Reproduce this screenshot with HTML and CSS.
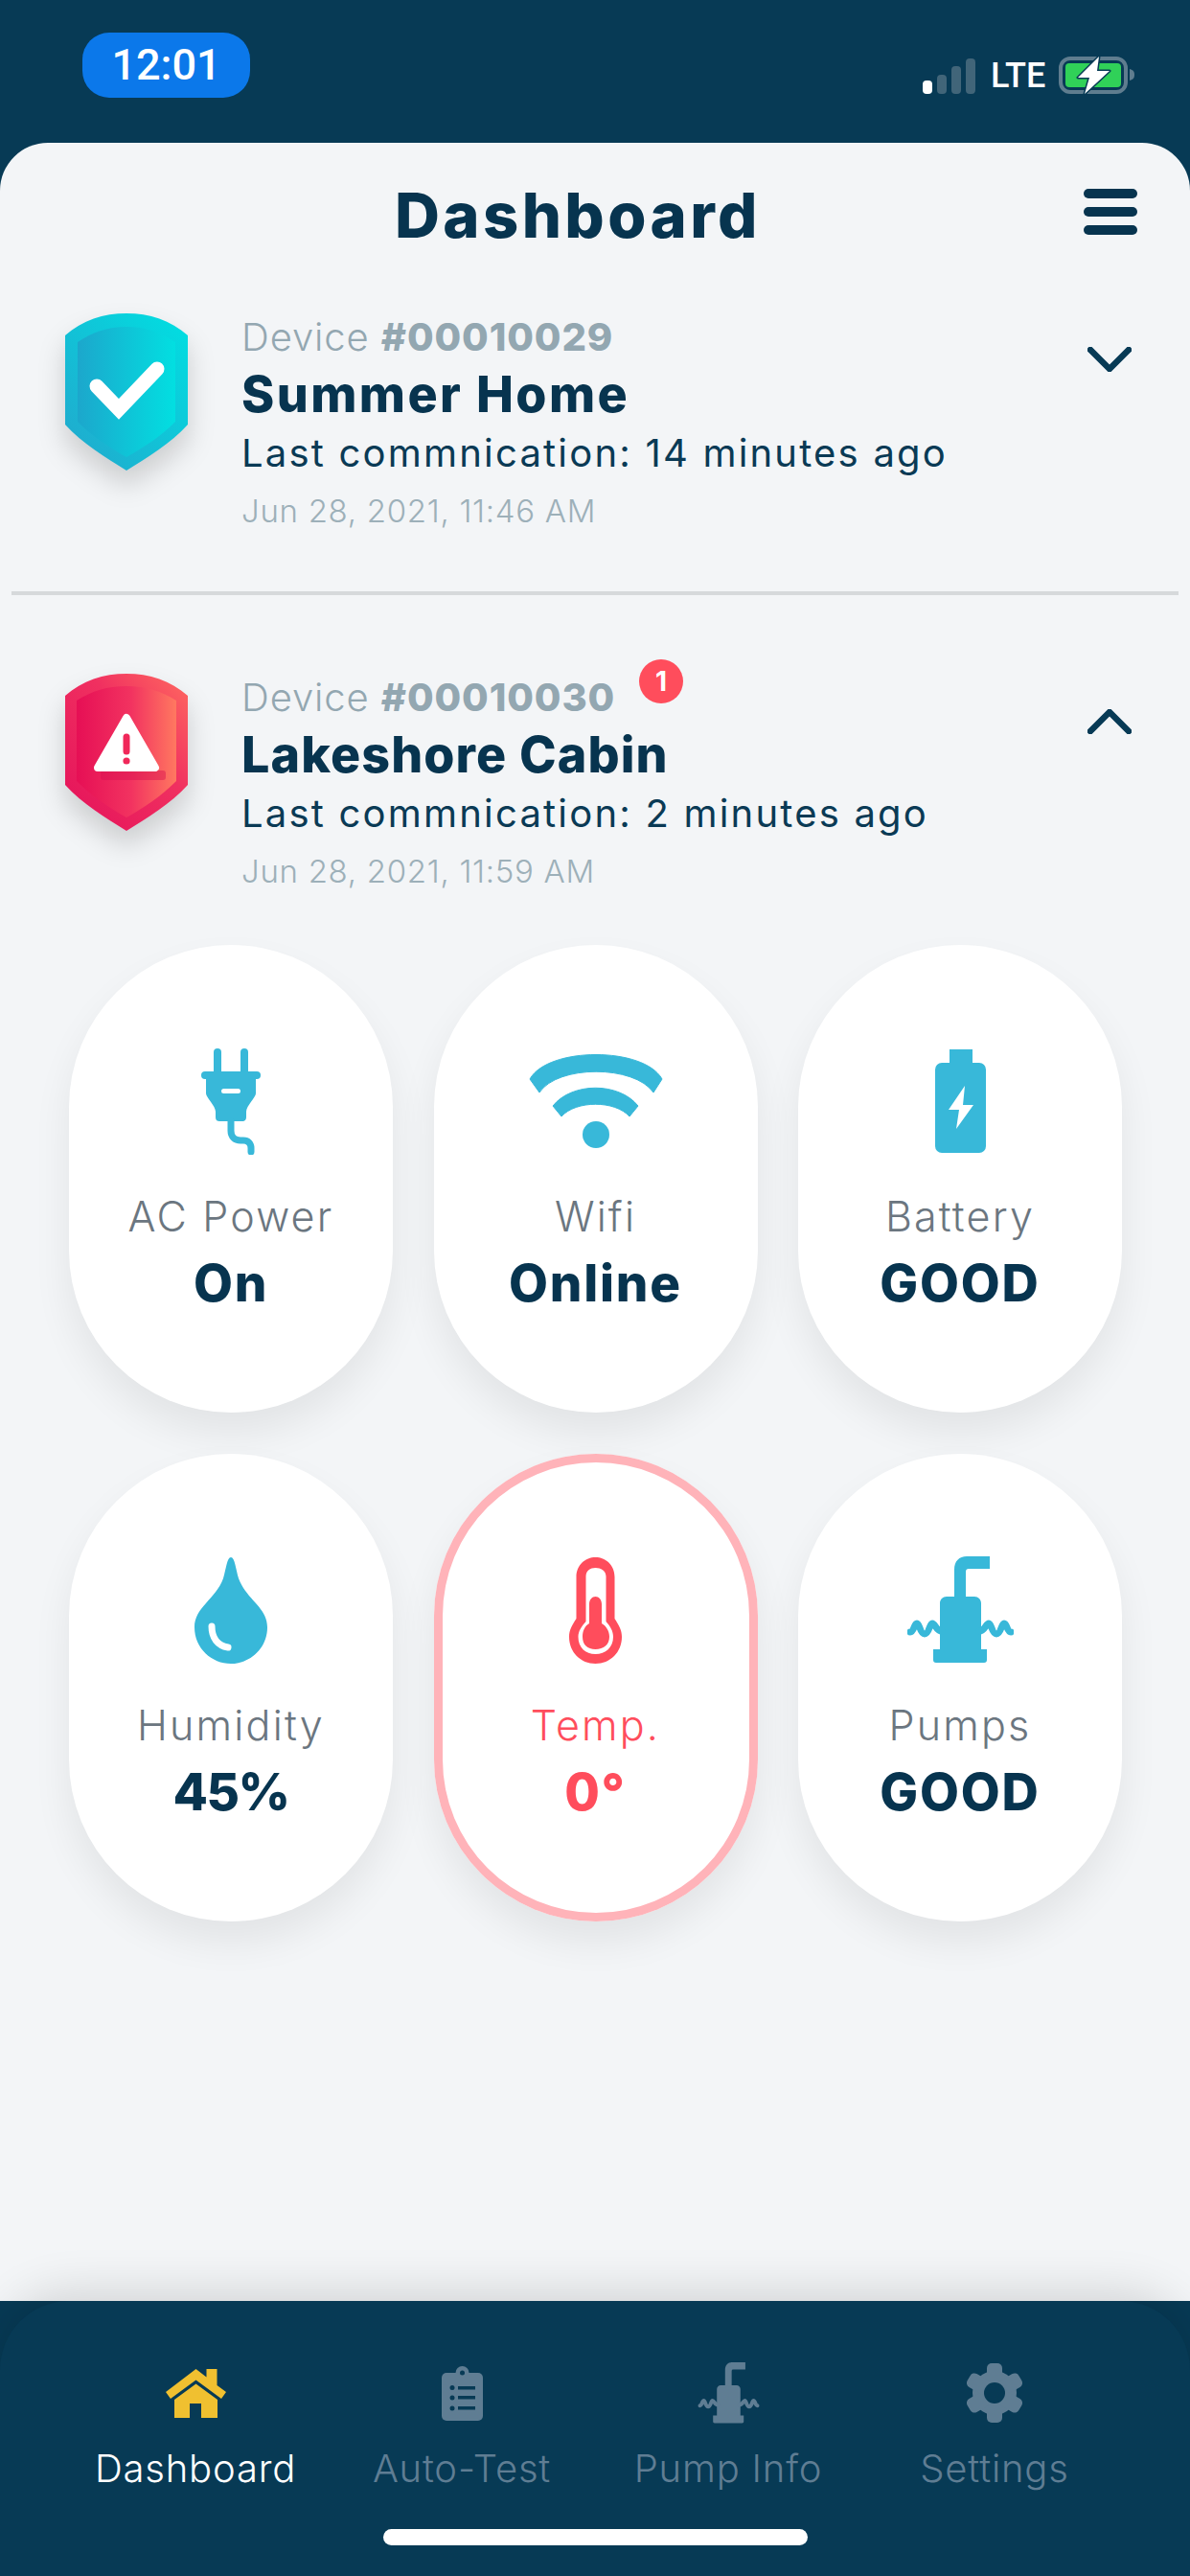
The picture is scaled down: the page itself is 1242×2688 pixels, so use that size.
FILE: index.html
```html
<!DOCTYPE html>
<html lang="en">
<head>
<meta charset="utf-8">
<title>Dashboard</title>
<link rel="stylesheet" href="styles.css">
</head>
<body>
<div class="app">
  <header class="status">
    <div class="clock">12:01</div>
    <div class="status-right">
      <div class="signal"><i class="b1"></i><i class="b2"></i><i class="b3"></i><i class="b4"></i></div>
      <span class="lte">LTE</span>
      <svg class="batt" width="82" height="42" viewBox="0 0 82 42">
        <rect x="2" y="4" width="68" height="35" rx="10" fill="none" stroke="#5f7d8f" stroke-width="4"/>
        <path d="M74 15c4 1 5 3 5 6s-1 5-5 6z" fill="#5f7d8f"/>
        <rect x="7" y="9" width="58" height="25" rx="4" fill="#30d158"/>
        <path d="M42 2 L20 24 H32 L27 41 L53 17 H40 Z" fill="#fff" stroke="#073a55" stroke-width="3" stroke-linejoin="round" paint-order="stroke"/>
      </svg>
    </div>
  </header>

  <main class="sheet">
    <div class="topbar">
      <h1 class="title">Dashboard</h1>
      <div class="burger"><i></i><i></i><i></i></div>
    </div>

    <section class="device">
      <svg class="shield" width="128" height="164" viewBox="0 0 128 164">
        <defs>
          <linearGradient id="cy1" x1="0" y1="1" x2="1" y2="0"><stop offset="0" stop-color="#23a6cc"/><stop offset="1" stop-color="#00e0e2"/></linearGradient>
          <linearGradient id="cy2" x1="0" y1="0" x2="1" y2="0"><stop offset="0" stop-color="#1ca7cc"/><stop offset="1" stop-color="#02dfe1"/></linearGradient>
        </defs>
        <path d="M0 23 C18 7 40 0 64 0 C88 0 110 7 128 23 V116 C110 136 86 150 64 164 C42 150 18 136 0 116 Z" fill="url(#cy1)"/>
        <path d="M13 30 C28 20 44 14 64 14 C84 14 100 20 115 30 V113 C100 128 82 140 64 150 C46 140 28 128 13 113 Z" fill="url(#cy2)"/>
        <path d="M33 76 L56 100 L96 58" fill="none" stroke="#fff" stroke-width="15" stroke-linejoin="miter" stroke-linecap="round"/>
      </svg>
      <div class="info">
        <div class="dev-id">Device <b>#00010029</b></div>
        <div class="dev-name">Summer Home</div>
        <div class="dev-last">Last commnication: 14 minutes ago</div>
        <div class="dev-date">Jun 28, 2021, 11:46 AM</div>
      </div>
      <svg class="chev" width="46" height="26" viewBox="0 0 46 26"><path d="M3 3 L23 23 L43 3" fill="none" stroke="#073a55" stroke-width="6.500" stroke-linecap="round" stroke-linejoin="round"/></svg>
    </section>

    <div class="divider"></div>

    <section class="device second">
      <svg class="shield" width="128" height="164" viewBox="0 0 128 164">
        <defs>
          <linearGradient id="rd1" x1="0" y1="1" x2="1" y2="0"><stop offset="0" stop-color="#e4105a"/><stop offset=".6" stop-color="#f03060"/><stop offset="1" stop-color="#ff6a60"/></linearGradient>
          <linearGradient id="rd2" x1="0" y1="0" x2="1" y2="0"><stop offset="0" stop-color="#e60f55"/><stop offset=".55" stop-color="#f23360"/><stop offset="1" stop-color="#ff7860"/></linearGradient>
        </defs>
        <path d="M0 23 C18 7 40 0 64 0 C88 0 110 7 128 23 V116 C110 136 86 150 64 164 C42 150 18 136 0 116 Z" fill="url(#rd1)"/>
        <path d="M12 28 C28 18 44 13 64 13 C84 13 100 18 116 28 V112 C100 128 82 140 64 150 C46 140 28 128 12 112 Z" fill="url(#rd2)"/>
        <rect x="37" y="101" width="68" height="10" rx="3" fill="#d80e50" opacity=".45"/>
        <path d="M64 46 L94 98 H34 Z" fill="#fff" stroke="#fff" stroke-width="8" stroke-linejoin="round"/>
        <path d="M64 66 V81" fill="none" stroke="#f0285a" stroke-width="7" stroke-linecap="round"/>
        <circle cx="64" cy="91" r="3.600" fill="#f0285a"/>
      </svg>
      <div class="info">
        <div class="dev-id">Device <b>#00010030</b><span class="badge">1</span></div>
        <div class="dev-name">Lakeshore Cabin</div>
        <div class="dev-last">Last commnication: 2 minutes ago</div>
        <div class="dev-date">Jun 28, 2021, 11:59 AM</div>
      </div>
      <svg class="chev" width="46" height="26" viewBox="0 0 46 26"><path d="M3 23 L23 3 L43 23" fill="none" stroke="#073a55" stroke-width="6.500" stroke-linecap="round" stroke-linejoin="round"/></svg>
    </section>

    <section class="tiles">
      <article class="tile">
        <div class="tile-icon">
          <svg width="62" height="111" viewBox="0 0 62 111">
            <rect x="13" y="0" width="8" height="28" rx="4" fill="#38b8d9"/>
            <rect x="41" y="0" width="8" height="28" rx="4" fill="#38b8d9"/>
            <rect x="0" y="24" width="62" height="8" rx="4" fill="#38b8d9"/>
            <path d="M5 30 H57 V47 C57 51 47 60 47 66 V72 C47 75 45 76 43 76 H19 C17 76 15 75 15 72 V66 C15 60 5 51 5 47 Z" fill="#38b8d9"/>
            <rect x="21" y="42" width="20" height="5" rx="2.500" fill="#fff"/>
            <path d="M31 76 V86 C31 92 35 96 41 96 H44 C49 96 52 99 52 104 V108" fill="none" stroke="#38b8d9" stroke-width="7" stroke-linecap="round"/>
          </svg>
        </div>
        <div class="tile-label">AC Power</div>
        <div class="tile-value">On</div>
      </article>
      <article class="tile">
        <div class="tile-icon">
          <svg width="140" height="98" viewBox="0 0 140 98">
            <path d="M1 26 C20 -8 120 -8 139 26 L130 40 C110 11 30 11 11 40 Z" fill="#38b8d9" stroke="#38b8d9" stroke-width="1" stroke-linejoin="round"/>
            <path d="M25 54 C45 29 94 29 114 54 L105 65 C90 48 49 48 34 65 Z" fill="#38b8d9" stroke="#38b8d9" stroke-width="1" stroke-linejoin="round"/>
            <circle cx="70" cy="84" r="14" fill="#38b8d9"/>
          </svg>
        </div>
        <div class="tile-label">Wifi</div>
        <div class="tile-value">Online</div>
      </article>
      <article class="tile">
        <div class="tile-icon">
          <svg width="53" height="108" viewBox="0 0 53 108">
            <rect x="15" y="0" width="24" height="18" fill="#38b8d9"/>
            <rect x="0" y="14" width="53" height="94" rx="7" fill="#38b8d9"/>
            <path d="M31 38 L14 63 H25 L22 83 L40 58 H29 Z" fill="#fff"/>
          </svg>
        </div>
        <div class="tile-label">Battery</div>
        <div class="tile-value">GOOD</div>
      </article>
      <article class="tile">
        <div class="tile-icon">
          <svg width="76" height="111" viewBox="0 0 76 111">
            <path d="M38 0 C42 0 43 12 46 22 C54 44 76 52 76 73 C76 95 58 111 38 111 C18 111 0 95 0 73 C0 52 22 44 30 22 C33 12 34 0 38 0 Z" fill="#38b8d9"/>
            <path d="M18 72 C18 84 24 92 35 94" fill="none" stroke="#fff" stroke-width="7" stroke-linecap="round"/>
          </svg>
        </div>
        <div class="tile-label">Humidity</div>
        <div class="tile-value tight">45%</div>
      </article>
      <article class="tile alert">
        <div class="tile-icon">
          <svg width="55" height="111" viewBox="0 0 55 111">
            <path d="M7.500 20.500 C7.500 8 17 0 27.500 0 C38 0 47.500 8 47.500 20.500 V64 C52 71 55 76 55 83 C55 99 43 111 27.500 111 C12 111 0 99 0 83 C0 76 3 71 7.500 64 Z" fill="#ff4d5c"/>
            <path d="M17.500 20 C17.500 14 22 11 27.500 11 C33 11 38.500 14 38.500 20 V67 C43 72 46 77 46 83 C46 94 38 101 27.500 101 C17 101 9.500 94 9.500 83 C9.500 77 13 72 17.500 67 Z" fill="#fff"/>
            <path d="M21 49 C21 44 24 41 27.500 41 C31 41 34 44 34 49 V69 C39 72 42 77 42 83 C42 91 36 96 27.500 96 C19 96 14 91 14 83 C14 77 16 72 21 69 Z" fill="#ff4d5c"/>
          </svg>
        </div>
        <div class="tile-label">Temp.</div>
        <div class="tile-value">0°</div>
      </article>
      <article class="tile">
        <div class="tile-icon">
          <svg class="pump" width="111" height="112" viewBox="0 0 111 112">
            <path d="M49 44 V14 C49 5 54 0 62 0 H86 V13 H64 C62 13 61 14 61 16 V44 Z" fill="currentColor"/>
            <path d="M34 49 C34 45 37 42 41 42 H70 C74 42 77 45 77 49 V97 H83 V108 C83 110 82 111 80 111 H30 C28 111 27 110 27 108 V97 H34 Z" fill="currentColor"/>
            <path d="M3 79 C7 79 7 70 10 70 C13 70 13 81 18 81 C23 81 23 70 26 70 C29 70 30 78 36 78" fill="none" stroke="currentColor" stroke-width="7" stroke-linecap="round"/>
            <path d="M108 79 C104 79 104 70 101 70 C98 70 98 81 93 81 C88 81 88 70 85 70 C82 70 81 78 75 78" fill="none" stroke="currentColor" stroke-width="7" stroke-linecap="round"/>
          </svg>
        </div>
        <div class="tile-label">Pumps</div>
        <div class="tile-value">GOOD</div>
      </article>
    </section>
  </main>

  <nav class="nav">
    <div class="nav-items">
      <div class="nav-item active">
        <div class="nav-icon">
          <svg width="63" height="51" viewBox="0 0 63 51">
            <path d="M31.500 0 L42.500 8.500 V0 H53.500 V17 L63 24 L58 31 L31.500 11.500 L5 31 L0 24 Z" fill="#f0c030"/>
            <path d="M9 32 L31.500 15.500 L54 32 V51 H37 V36 H25 V51 H9 Z" fill="#f0c030"/>
          </svg>
        </div>
        <span>Dashboard</span>
      </div>
      <div class="nav-item">
        <div class="nav-icon">
          <svg width="43" height="57" viewBox="0 0 43 57">
            <circle cx="21.500" cy="7" r="7" fill="#5f7d93"/>
            <rect x="0" y="7" width="43" height="50" rx="5" fill="#5f7d93"/>
            <circle cx="21.500" cy="7" r="2.500" fill="#073a55"/>
            <g fill="#073a55">
              <circle cx="11" cy="22.500" r="2.500"/><rect x="17" y="21" width="18" height="3.500"/>
              <circle cx="11" cy="33" r="2.500"/><rect x="17" y="31" width="18" height="3.500"/>
              <circle cx="11" cy="44" r="2.500"/><rect x="17" y="42" width="18" height="3.500"/>
            </g>
          </svg>
        </div>
        <span>Auto-Test</span>
      </div>
      <div class="nav-item">
        <div class="nav-icon">
          <svg class="pump" width="65" height="64" viewBox="0 0 111 112">
            <path d="M49 44 V14 C49 5 54 0 62 0 H86 V13 H64 C62 13 61 14 61 16 V44 Z" fill="currentColor"/>
            <path d="M34 49 C34 45 37 42 41 42 H70 C74 42 77 45 77 49 V97 H83 V108 C83 110 82 111 80 111 H30 C28 111 27 110 27 108 V97 H34 Z" fill="currentColor"/>
            <path d="M3 79 C7 79 7 70 10 70 C13 70 13 81 18 81 C23 81 23 70 26 70 C29 70 30 78 36 78" fill="none" stroke="currentColor" stroke-width="7" stroke-linecap="round"/>
            <path d="M108 79 C104 79 104 70 101 70 C98 70 98 81 93 81 C88 81 88 70 85 70 C82 70 81 78 75 78" fill="none" stroke="currentColor" stroke-width="7" stroke-linecap="round"/>
          </svg>
        </div>
        <span>Pump Info</span>
      </div>
      <div class="nav-item">
        <div class="nav-icon">
          <svg width="60" height="62" viewBox="0 0 60 62">
            <g fill="#5f7d93">
              <circle cx="30" cy="31" r="23"/>
              <rect x="22" y="0" width="16" height="62" rx="5"/>
              <rect x="22" y="0" width="16" height="62" rx="5" transform="rotate(60 30 31)"/>
              <rect x="22" y="0" width="16" height="62" rx="5" transform="rotate(120 30 31)"/>
            </g>
            <circle cx="30" cy="31" r="11" fill="#073a55"/>
          </svg>
        </div>
        <span>Settings</span>
      </div>
    </div>
    <div class="home-bar"></div>
  </nav>
</div>
</body>
</html>
```
FILE: styles.css
```css
* { box-sizing: border-box; }
html, body { margin: 0; padding: 0; }
body { width: 1242px; height: 2688px; overflow: hidden; background: #073a55; font-family: Inter, "Liberation Sans", sans-serif; }
.app { width: 1242px; height: 2688px; display: flex; flex-direction: column; background: #073a55; }

.status { height: 149px; flex: none; display: flex; justify-content: space-between; padding: 34px 55px 0 86px; }
.clock { width: 175px; height: 68px; border-radius: 28px; background: #0b78ea; color: #fff; font: 500 45px/68px Roboto, sans-serif; text-align: center; }
.status-right { display: flex; align-items: flex-end; height: 64px; }
.signal { display: flex; align-items: flex-end; gap: 5px; height: 38px; margin-right: 16px; }
.signal i { display: block; width: 10px; border-radius: 4px; background: #416579; }
.signal .b1 { height: 14px; background: #fff; }
.signal .b2 { height: 20px; }
.signal .b3 { height: 29px; }
.signal .b4 { height: 37px; }
.lte { color: #fff; font: 500 36px/38px Roboto, sans-serif; margin-right: 15px; width: 56px; }
.batt { display: block; margin-bottom: -1px; }

.sheet { flex: 1; min-height: 0; background: #f3f5f7; border-radius: 50px 50px 0 0; display: flex; flex-direction: column; }
.topbar { height: 178px; flex: none; display: flex; align-items: flex-start; padding: 36px 55px 0 412px; }
.title { margin: 0; color: #07344f; font-size: 65px; line-height: 80px; font-weight: 800; letter-spacing: 3.400px; }
.burger { margin-left: auto; margin-top: 12px; display: flex; flex-direction: column; gap: 9px; }
.burger i { display: block; width: 56px; height: 10px; border-radius: 5px; background: #07344f; }

.device { display: flex; align-items: flex-start; height: 290px; padding-left: 68px; position: relative; }
.shield { display: block; flex: none; filter: drop-shadow(0 16px 14px rgba(0,0,0,.16)); }
.info { margin-left: 56px; flex: none; }
.dev-id { color: #93a7b1; font-size: 40px; font-weight: 300; line-height: 48px; letter-spacing: .9px; position: relative; margin-top: 1px; margin-bottom: -1px; }
.dev-id b { font-weight: 800; }
.dev-name { color: #07344f; font-size: 52px; font-weight: 800; line-height: 60px; margin-top: 7px; letter-spacing: 2.400px; }
.second .dev-name { letter-spacing: 1.100px; }
.dev-last { color: #0a3a55; font-size: 40px; font-weight: 400; line-height: 50px; margin-top: 6px; letter-spacing: 2.200px; }
.dev-date { color: #9db0b9; font-size: 33px; font-weight: 300; line-height: 44px; margin-top: 13px; letter-spacing: .7px; }
.chev { position: absolute; left: 1135px; top: 35px; }
.divider { height: 4px; margin: 0 12px; background: #d6d9db; flex: none; }
.second { margin-top: 82px; height: 283px; }
.second .chev { top: 37px; }
.badge { position: absolute; left: 415px; top: -16px; width: 46px; height: 46px; border-radius: 50%; background: #ff4d5c; color: #fff; font-size: 28px; font-weight: 700; line-height: 46px; text-align: center; letter-spacing: 0; }

.tiles { display: grid; grid-template-columns: repeat(3, 338px); gap: 43px 42.500px; padding-left: 72px; margin-top: 0; }
.tile { height: 488px; border-radius: 169px; background: #fff; box-shadow: 0 22px 40px rgba(0,0,0,.07); display: flex; flex-direction: column; align-items: center; padding-top: 107px; color: #6b7680; }
.tile-icon { height: 112px; display: flex; align-items: center; justify-content: center; color: #38b8d9; }
.tile-icon svg, .nav-icon svg { display: block; }
.tile-label { font-size: 43px; font-weight: 300; line-height: 50px; margin-top: 39px; letter-spacing: 2.200px; }
.tile-value { color: #07344f; font-size: 53px; font-weight: 800; line-height: 60px; margin-top: 15px; letter-spacing: 1.800px; }
.tile-value.tight { letter-spacing: -1.500px; }
.alert { box-shadow: inset 0 0 0 9px #ffb3b9, 0 22px 40px rgba(0,0,0,.07); color: #ff4d5c; }
.alert .tile-value { color: #ff4d5c; }

.nav { height: 287px; flex: none; background: #073a55; border-radius: 72px 72px 0 0; box-shadow: 0 -8px 50px rgba(0,0,0,.14); padding: 63px 65px 0; position: relative; }
.nav-items { display: grid; grid-template-columns: repeat(4, 278px); }
.nav-item { display: flex; flex-direction: column; align-items: center; color: #5f7d93; font-size: 40px; font-weight: 300; line-height: 48px; letter-spacing: .8px; }
.nav-item.active { color: #fff; }
.nav-icon { height: 66px; display: flex; align-items: center; justify-content: center; margin-bottom: 22px; }
.pump { color: #38b8d9; }
.nav .pump { color: #5f7d93; }
.home-bar { width: 443px; height: 17px; border-radius: 9px; background: #fff; margin: 39px auto 0; }
```
